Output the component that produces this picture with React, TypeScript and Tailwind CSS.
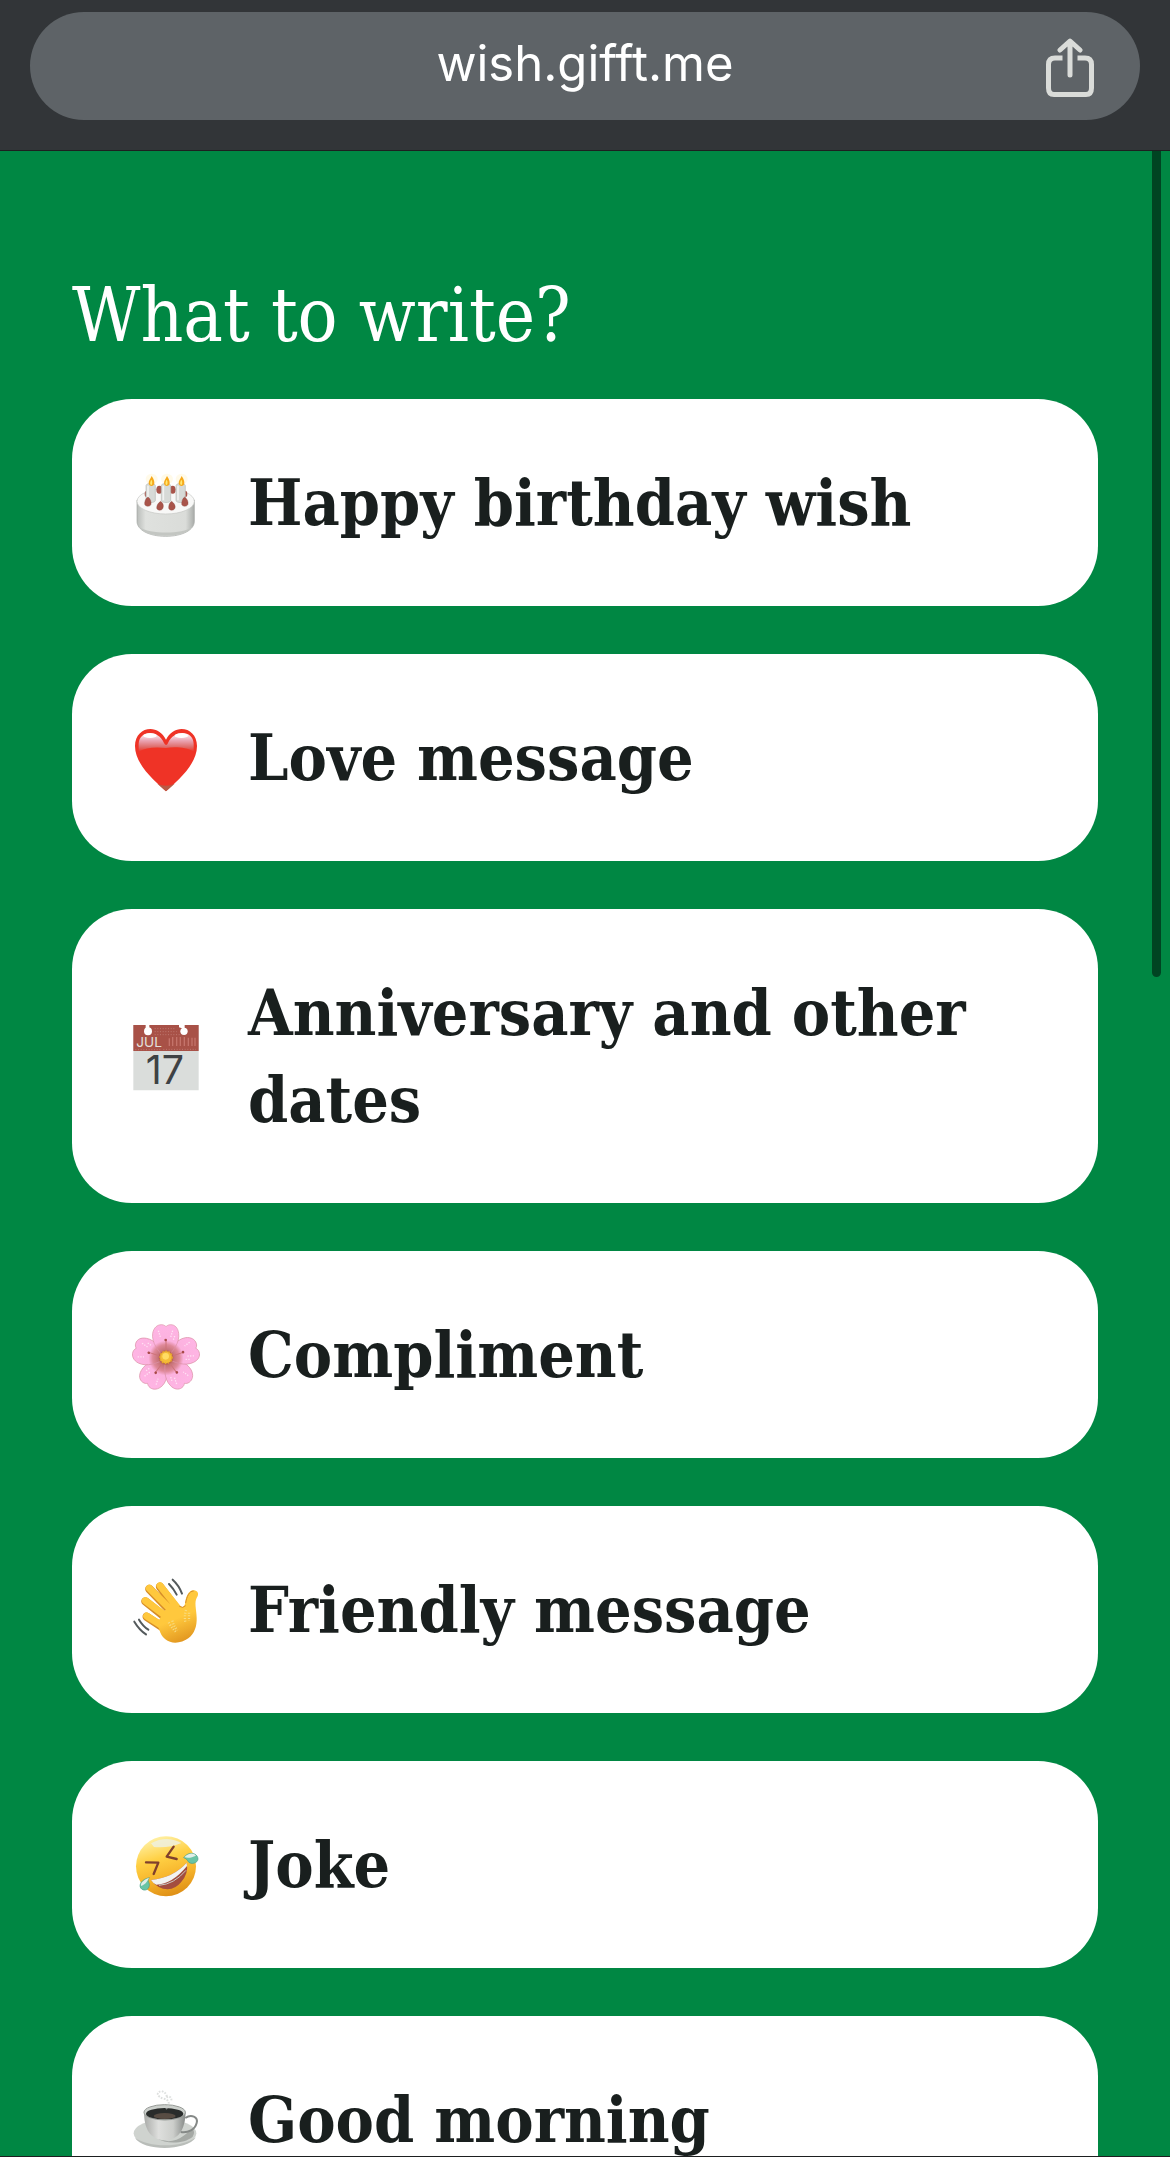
import type { ComponentType, ReactNode } from "react";

// ---------------------------------------------------------------------------
// Icons
// ---------------------------------------------------------------------------
function IconFrame({ viewBox = "36 31 204 204", children }: { viewBox?: string; children: ReactNode }) {
  return (
    <svg viewBox={viewBox} className="size-[68px] shrink-0 overflow-visible" aria-hidden="true">
      {children}
    </svg>
  );
}

function CakeIcon() {
  return (
    <IconFrame viewBox="36 25 204 204">
      <defs>
        <linearGradient id="cakeSide" x1="0" x2="1">
          <stop offset="0" stopColor="#b9bcb9" />
          <stop offset="0.15" stopColor="#dfe1de" />
          <stop offset="0.85" stopColor="#dadcd9" />
          <stop offset="1" stopColor="#a9aca9" />
        </linearGradient>
      </defs>
      <path d="M51 118v64c0 26 36 45 86 45s86-19 86-45v-64z" fill="url(#cakeSide)" stroke="#a3a6a3" strokeWidth="2" />
      <path d="M60 200c24 20 128 22 155 0-15 33-140 35-155 0z" fill="#c3c6c2" />
      <ellipse cx="137" cy="122" rx="86" ry="38" fill="#f8f8f7" stroke="#c5c7c4" strokeWidth="2" />
      <g fill="#a9544a">
        <ellipse cx="118" cy="87" rx="9" ry="12" />
        <ellipse cx="158" cy="87" rx="9" ry="12" />
        <ellipse cx="81" cy="100" rx="7" ry="10" />
        <ellipse cx="195" cy="100" rx="7" ry="10" />
      </g>
      {[92, 138, 182].map((x) => (
        <g key={x}>
          <ellipse cx={x + 3} cy="55" rx="18" ry="16" fill="#fff3c8" opacity="0.4" />
          <path d={`M${x - 14} 75c0-9 28-9 28 0v44c0 9-28 9-28 0z`} fill="#d7dad7" stroke="#b8bbb8" strokeWidth="2" />
          <path d={`M${x - 8} 75v44`} stroke="#f1f2f1" strokeWidth="5" />
          <path d={`M${x + 3} 46c7 11 8 15 8 21 0 12-17 12-17 0 0-7 5-13 9-21z`} fill="#f6a91b" />
          <path d={`M${x + 2} 57c4 5 3 15 0 16-5-1-4-10 0-16z`} fill="#ffe873" />
        </g>
      ))}
      <g fill="#a9544a" stroke="#874139" strokeWidth="1">
        <path d="M84 109c8 5 10 16 9 22-2 8-17 8-19 0-1-8 3-18 10-22z" />
        <path d="M122 122c9 7 9 14 7 20-3 9-17 9-19 0 0-8 5-16 12-20z" />
        <path d="M155 122c9 7 12 14 10 20-3 9-17 9-19 0 0-8 2-16 9-20z" />
        <path d="M194 109c9 7 11 14 10 22-3 8-17 8-19 0 0-8 2-18 9-22z" />
      </g>
    </IconFrame>
  );
}

function HeartIcon() {
  return (
    <IconFrame viewBox="36 25 204 204">
      <defs>
        <linearGradient id="heartShine" x1="0" y1="0" x2="0" y2="1">
          <stop offset="0" stopColor="#fff" />
          <stop offset="0.4" stopColor="#eba5b4" />
          <stop offset="0.75" stopColor="#de6b69" />
          <stop offset="1" stopColor="#ef3326" />
        </linearGradient>
      </defs>
      <path
        d="M138 227C112 202 45 150 45 91c0-58 69-70 93-19 24-51 93-39 93 19 0 59-67 111-93 136z"
        fill="#ef3326"
      />
      <path d="M56 108V84c2-39 57-45 76-2 4 8 9 8 12 0 20-43 76-37 77 2v24c-22-14-58-15-83-11-30-4-62-2-82 11z" fill="url(#heartShine)" />
      <path d="M112 204q26 12 52 0l-26 23z" fill="#b85a45" />
      <ellipse cx="90" cy="60" rx="20" ry="7" fill="#fff" />
      <ellipse cx="184" cy="60" rx="20" ry="7" fill="#fff" />
    </IconFrame>
  );
}

function CalendarIcon() {
  return (
    <IconFrame viewBox="36 36 204 204">
      <path d="M40 45h196v196H40z" fill="#dadddb" />
      <path d="M40 45h196v78H40z" fill="#a85147" />
      <g fill="#fff">
        <path d="M77 44h11v14H77zM177 44h17v14l-17-6z" />
        <circle cx="84" cy="64" r="12" />
        <circle cx="192" cy="64" r="11" />
      </g>
      <g stroke="#c98c84" strokeWidth="2" strokeDasharray="3 5">
        <path d="M104 56h62M104 65h66M104 74h76M130 118h98M46 119h78" />
      </g>
      <path d="M148 85v23M158 81v27M170 81v27M181 81v27M193 81v27M205 83v25M216 83v25M225 83v25" stroke="#c4736a" strokeWidth="4" />
      <text x="49" y="110" fontFamily="Inter, sans-serif" fontSize="41" fontWeight="400" fill="#e3e0dd">
        JUL
      </text>
      <text x="135" y="222" textAnchor="middle" fontFamily="Inter, sans-serif" fontSize="118" fontWeight="400" fill="#3e4244">
        17
      </text>
    </IconFrame>
  );
}

const PETAL = "M137 142c-22-18-43-47-39-74 3-17 14-26 26-26 7 0 11 3 14 6 3-3 7-6 14-6 12 0 22 9 24 26 4 27-17 56-39 74z";

function BlossomIcon() {
  return (
    <IconFrame>
      <defs>
        <radialGradient id="petal" gradientUnits="userSpaceOnUse" cx="138" cy="142" r="105">
          <stop offset="0.15" stopColor="#ba6868" />
          <stop offset="0.38" stopColor="#df8999" />
          <stop offset="0.5" stopColor="#fcb2df" />
          <stop offset="1" stopColor="#ffb5e5" />
        </radialGradient>
      </defs>
      {[216, 144, 288, 72, 0].map((angle) => (
        <g key={angle} transform={`rotate(${angle} 138 142)`}>
          <path d={PETAL} fill="url(#petal)" stroke="#dc91a6" strokeWidth="2" />
          <path d="M115 60l6 18M158 60l-6 20M164 76l-5 15" stroke="#ffe2f4" strokeWidth="4" strokeDasharray="4 4" />
          <path d="M138 120V90" stroke="#cd7379" strokeWidth="3" />
          <circle cx="137" cy="88" r="4" fill="#a84a48" />
        </g>
      ))}
      <circle cx="138" cy="141" r="22" fill="#bc6656" />
      <circle cx="138" cy="140" r="18" fill="#f4bc38" stroke="#e9a829" strokeWidth="5" strokeDasharray="4 5" />
      <circle cx="137" cy="137" r="10" fill="#ffdc63" />
    </IconFrame>
  );
}

function WaveIcon() {
  return (
    <IconFrame>
      <defs>
        <linearGradient id="hand" gradientUnits="userSpaceOnUse" x1="130" y1="90" x2="190" y2="235">
          <stop offset="0.5" stopColor="#ffc83d" />
          <stop offset="1" stopColor="#df921d" />
        </linearGradient>
      </defs>
      {/* Fingers, then the palm and thumb over their roots */}
      <g fill="none" strokeLinecap="round">
        <path d="M80 153l50 33M76 107l56 45M88 70l58 60M120 63l50 66" stroke="#d68d28" strokeWidth="25" />
        <path d="M80 151l52 33M76 105l60 45M88 68l60 60M120 60l54 68" stroke="#ffc83d" strokeWidth="21" />
      </g>
      <path
        d="M112 172l19-34 25-25 20 8c8 6 17 4 19-7 2-22 12-43 28-40 12 3 14 12 8 21-9 15-2 34-1 61 1 25-6 47-25 62-20 15-50 19-69 3-14-11-18-28-24-49z"
        fill="url(#hand)"
      />
      <path d="M197 112c3-18 10-36 24-36M178 122q11 7 19-2" fill="none" stroke="#d68d28" strokeWidth="3" />
      <g fill="none" stroke="#f8dc82" strokeWidth="7" strokeDasharray="3 5">
        <path d="M146 170q10 18 24 31M157 165q5 19 16 28M198 133q-6 22-1 38M207 141v25" />
      </g>
      <g fill="none" stroke="#545a5c" strokeWidth="6" strokeLinecap="round">
        <path d="M147 55q14 14 23 32M158 42q19 17 28 42M43 168q15 25 35 38M57 162q12 20 28 30" />
      </g>
    </IconFrame>
  );
}

function LaughIcon() {
  return (
    <IconFrame>
      <defs>
        <linearGradient id="face" x1="0.35" y1="0" x2="0.65" y2="1">
          <stop offset="0" stopColor="#fff1a6" />
          <stop offset="0.35" stopColor="#ffd044" />
          <stop offset="0.65" stopColor="#f7b52c" />
          <stop offset="1" stopColor="#dd8d15" />
        </linearGradient>
      </defs>
      <circle cx="138" cy="137" r="90" fill="url(#face)" />
      <path d="M93 68q45-25 91-1-32 15-82 12z" fill="#eef0df" opacity="0.85" />
      <g fill="none" stroke="#80402c" strokeWidth="7" strokeLinecap="round" strokeLinejoin="round">
        <path d="M78 125l37 1-14 34M161 78l-21 30 30 7" />
      </g>
      <path d="M93 178q67-7 107-52 7 31-17 59-16 20-40 21-29 0-50-28z" fill="#a34d3f" />
      <path d="M93 178q67-7 107-52l1 10q-44 54-92 56-10-4-16-14z" fill="#f2f3f1" />
      <path d="M117 194q45-3 81-45" fill="none" stroke="#c9cac6" strokeWidth="3" />
      <path d="M191 111c14-18 33-15 40-5 9 13-4 24-18 22-10-1-10-15-22-17z" fill="#69c4a5" stroke="#479f88" strokeWidth="2" />
      <path d="M193 110c13-14 28-14 35-5-12 5-20 8-35 5z" fill="#e2eee8" />
      <path d="M88 171c-23 5-32 20-26 31 8 11 25 7 26-8 1-10-8-13 0-23z" fill="#69c4a5" stroke="#479f88" strokeWidth="2" />
      <path d="M87 171c-20 8-26 18-24 25 11-4 18-11 24-25z" fill="#e2eee8" />
    </IconFrame>
  );
}

function CoffeeIcon() {
  return (
    <IconFrame>
      <defs>
        <linearGradient id="cup" x1="0" x2="1">
          <stop offset="0" stopColor="#a9aba8" />
          <stop offset="0.35" stopColor="#dedfdd" />
          <stop offset="0.7" stopColor="#cccecb" />
          <stop offset="1" stopColor="#858987" />
        </linearGradient>
      </defs>
      <ellipse cx="135" cy="173" rx="94" ry="42" fill="#cfd3cf" />
      <path d="M45 187c25 40 155 40 183-2-25 17-54 24-92 24s-70-9-91-22z" fill="#b9bdb9" />
      <path d="M110 187q42 23 83-8l24-20q10 9 1 24c-28 23-80 23-108 4z" fill="#a5a9a5" />
      <path d="M196 127c18-13 39-3 34 15-5 19-25 31-48 27" fill="none" stroke="#858987" strokeWidth="6" />
      <path d="M72 108c0 50 18 85 63 85s61-39 62-85z" fill="url(#cup)" />
      <ellipse cx="134" cy="110" rx="62" ry="23" fill="#ccd0cc" stroke="#969a96" strokeWidth="3" />
      <ellipse cx="134" cy="114" rx="56" ry="17" fill="#292c2b" />
      <ellipse cx="134" cy="121" rx="33" ry="9" fill="#574c43" />
      <path d="M138 100c14-16 9-28-7-31-19-5-25-19-6-23 12 5 17 12 14 20 10-8 18 1 14 11" fill="none" stroke="#c8cbc9" strokeWidth="6" strokeDasharray="5 4" opacity="0.6" />
    </IconFrame>
  );
}

function ShareIcon() {
  return (
    <svg
      viewBox="0 0 48 60"
      className="h-[60px] w-12"
      fill="none"
      stroke="#dadcd9"
      strokeWidth="5"
      strokeLinecap="round"
      strokeLinejoin="round"
      aria-hidden="true"
    >
      <path d="M24 37V4M14 12L24 3l10 9" />
      <path d="M16.5 20H9q-6.500 0-6.500 6.500V50q0 6.500 5.500 6.500h32q5.500 0 5.500-6.500V26.500Q45.500 20 39 20h-7.500" strokeLinecap="butt" />
    </svg>
  );
}

// ---------------------------------------------------------------------------
// Data
// ---------------------------------------------------------------------------
interface Topic {
  label: string;
  Icon: ComponentType;
}

const topics: Topic[] = [
  { label: "Happy birthday wish", Icon: CakeIcon },
  { label: "Love message", Icon: HeartIcon },
  { label: "Anniversary and other dates", Icon: CalendarIcon },
  { label: "Compliment", Icon: BlossomIcon },
  { label: "Friendly message", Icon: WaveIcon },
  { label: "Joke", Icon: LaughIcon },
  { label: "Good morning", Icon: CoffeeIcon },
];

// ---------------------------------------------------------------------------
// Page
// ---------------------------------------------------------------------------
export default function App() {
  return (
    <div className="flex h-screen flex-col overflow-hidden border-b border-[#1d1f20] bg-[#008743]">
      <header className="shrink-0 border-b border-[#1d1f20] bg-[#323538] px-[30px] pt-3 pb-[30px]">
        <div className="grid h-[108px] grid-cols-[1fr_auto_1fr] items-center rounded-full bg-[#5e6367] px-[46px]">
          <a href="#top" className="col-start-2 pb-1 font-['Inter',sans-serif] text-[49px] leading-[60px] text-white">
            wish.gifft.me
          </a>
          <button type="button" aria-label="Share" className="justify-self-end pt-1">
            <ShareIcon />
          </button>
        </div>
      </header>

      <div className="relative min-h-0 flex-1">
        <main
          id="top"
          className="h-full overflow-y-auto px-[72px] pt-[116px] font-['Roboto_Slab','DejaVu_Serif_Condensed','DejaVu_Serif',serif] [scrollbar-width:none]"
        >
          <h1 className="mb-9 text-[74px] leading-24 text-white">What to write?</h1>
          <ul className="flex flex-col gap-12 pb-12">
            {topics.map(({ label, Icon }) => (
              <li key={label}>
                <button
                  type="button"
                  className="flex w-full items-center gap-12 rounded-[60px] bg-white p-[60px] text-left text-[64px] leading-[87px] font-bold text-[#191f1e]"
                >
                  <Icon />
                  <span>{label}</span>
                </button>
              </li>
            ))}
          </ul>
        </main>
        {/* Scroll indicator */}
        <div className="absolute top-0 right-[9px] h-[826px] w-[9px] rounded-b-full bg-[#004422]" />
      </div>
    </div>
  );
}
